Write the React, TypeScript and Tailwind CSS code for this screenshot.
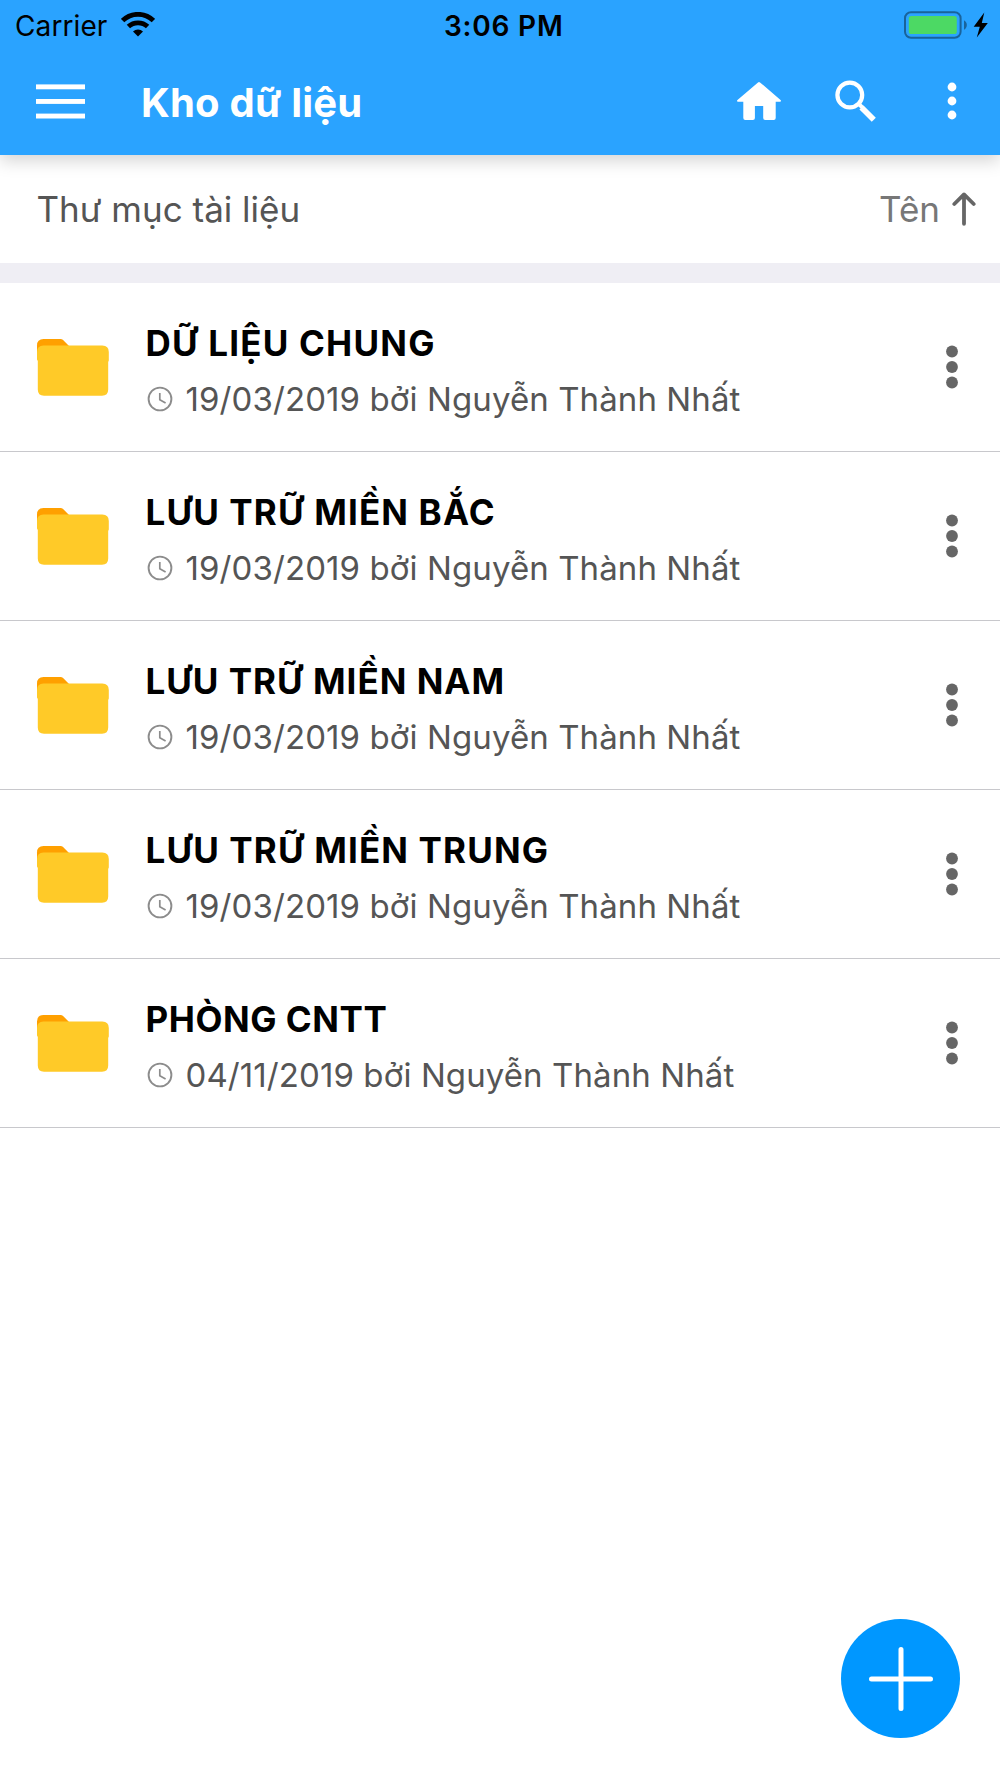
type Folder = {
  name: string;
  date: string;
  owner: string;
  tracking: string;
};

const folders: Folder[] = [
  { name: "DỮ LIỆU CHUNG", date: "19/03/2019", owner: "Nguyễn Thành Nhất", tracking: "tracking-[1.2px]" },
  { name: "LƯU TRỮ MIỀN BẮC", date: "19/03/2019", owner: "Nguyễn Thành Nhất", tracking: "tracking-[1.15px]" },
  { name: "LƯU TRỮ MIỀN NAM", date: "19/03/2019", owner: "Nguyễn Thành Nhất", tracking: "tracking-[1px]" },
  { name: "LƯU TRỮ MIỀN TRUNG", date: "19/03/2019", owner: "Nguyễn Thành Nhất", tracking: "tracking-[1.15px]" },
  { name: "PHÒNG CNTT", date: "04/11/2019", owner: "Nguyễn Thành Nhất", tracking: "tracking-[0.55px]" },
];

function WifiIcon() {
  return (
    <svg className="h-[25px] w-[34px]" viewBox="0 0 34 25" fill="none">
      <path d="M1.6 8.6a22 22 0 0 1 30.8 0" stroke="#000" strokeWidth="4.8" />
      <path d="M7.4 14.6a14 14 0 0 1 19.2 0" stroke="#000" strokeWidth="4.8" />
      <path d="M17 24.6l-5-5.1a7.6 7.6 0 0 1 10 0z" fill="#000" />
    </svg>
  );
}

function BatteryIcon() {
  return (
    <svg className="h-[28px] w-[64px]" viewBox="0 0 64 28" fill="none">
      <rect x="1" y="1.2" width="55.6" height="25.6" rx="6" stroke="#19639b" strokeWidth="2" />
      <rect x="4.8" y="5" width="48" height="18" rx="2.6" fill="#4cd964" />
      <path d="M60 9.2c1.8 1 2.8 2.8 2.8 4.8s-1 3.8-2.8 4.8z" fill="#19639b" />
    </svg>
  );
}

function BoltIcon() {
  return (
    <svg className="h-[26px] w-[16px]" viewBox="0 0 16 26">
      <path d="M11.3 0.5L0.7 14.8h6.1L3.8 25.5 14.8 11H8.8z" fill="#000" />
    </svg>
  );
}

function MenuIcon() {
  return (
    <svg className="h-[35px] w-[49px]" viewBox="0 0 49 35" fill="#fff">
      <rect y="0.4" width="49" height="4.9" />
      <rect y="15" width="49" height="4.9" />
      <rect y="29.6" width="49" height="4.9" />
    </svg>
  );
}

function HomeIcon() {
  return (
    <svg className="h-[40px] w-[46px]" viewBox="0 0 46 40" fill="#fff">
      <path d="M22 1.4q1-.8 2 0L44.8 19.2q.6 1.4-.8 1.5h-4.3v16.4q0 2-2 2H29.2q-2 0-2-2V25.100h-8.300v12q0 2-2 2H9.300q-2 0-2-2V20.700H2q-1.400-.1-.8-1.500z" />
    </svg>
  );
}

function SearchIcon() {
  return (
    <svg className="h-[42px] w-[42px]" viewBox="0 0 42 42" fill="none" stroke="#fff">
      <circle cx="14.8" cy="15" r="12.4" strokeWidth="4.2" />
      <path d="M23.5 23.7l4 4" strokeWidth="4" />
      <path d="M26.5 27.5L38.8 39.7" strokeWidth="5.8" />
    </svg>
  );
}

function HeaderDots() {
  return (
    <svg className="h-[38px] w-[10px]" viewBox="0 0 10 38" fill="#fff">
      <circle cx="5" cy="5" r="4.4" />
      <circle cx="5" cy="19" r="4.4" />
      <circle cx="5" cy="33" r="4.4" />
    </svg>
  );
}

function RowDots() {
  return (
    <svg className="h-[44px] w-[12px]" viewBox="0 0 12 44" fill="#666">
      <circle cx="6" cy="6.5" r="5.9" />
      <circle cx="6" cy="22" r="5.9" />
      <circle cx="6" cy="37.5" r="5.9" />
    </svg>
  );
}

function SortArrow() {
  return (
    <svg
      className="h-[34px] w-[24px]"
      viewBox="0 0 24 34"
      fill="none"
      stroke="#666"
      strokeWidth="3.8"
      strokeLinecap="round"
      strokeLinejoin="round"
    >
      <path d="M12 31.8V2.5M2.3 12L12 2.4 21.7 12" />
    </svg>
  );
}

function FolderIcon() {
  return (
    <svg className="h-[58px] w-[74px]" viewBox="0 0 74 58">
      <path d="M1 20V7.5Q1 1 7.5 1h17q1.5 0 2.6 1.1L35 10v10z" fill="#ffa000" />
      <path
        d="M1 14q0-6.5 6.500-6.500h58.800q6.500 0 6.500 6.500v8.500l-.6 1.500v27.500q0 6.200-6.200 6.200H8q-6.200 0-6.200-6.200V23L1 21.500z"
        fill="#ffca28"
      />
    </svg>
  );
}

function ClockIcon() {
  return (
    <svg className="h-[26px] w-[26px]" viewBox="0 0 26 26" fill="none" stroke="#8c8c8c">
      <circle cx="13" cy="13" r="11.4" strokeWidth="1.9" />
      <path d="M12.8 7v6.8l5.8 3.2" strokeWidth="1.7" />
    </svg>
  );
}

function StatusBar() {
  return (
    <div className="grid h-[49px] grid-cols-[1fr_auto_1fr] items-center pr-[11.5px] pl-[15px] text-[28px] leading-none text-black">
      <div className="flex items-center gap-[14px]">
        <span className="pt-[2px] tracking-[0.1px]">Carrier</span>
        <WifiIcon />
      </div>
      <span className="pt-[2px] pl-[4px] font-semibold tracking-[0.8px]">3:06 PM</span>
      <div className="flex items-center justify-end gap-[5px]">
        <BatteryIcon />
        <BoltIcon />
      </div>
    </div>
  );
}

function Toolbar() {
  return (
    <div className="flex h-[104px] items-center pr-[43.5px] pl-[36px] text-white">
      <MenuIcon />
      <h1 className="ml-[56px] flex-1 pt-[4px] text-[40px] leading-none font-bold tracking-[0.2px]">Kho dữ liệu</h1>
      <HomeIcon />
      <div className="ml-[53px]">
        <SearchIcon />
      </div>
      <div className="ml-[70px] flex">
        <HeaderDots />
      </div>
    </div>
  );
}

function FolderRow({ folder }: { folder: Folder }) {
  return (
    <li className="flex h-[169px] items-center border-b border-[#c8c8cc] pr-[42.5px] pl-[35.5px]">
      <FolderIcon />
      <div className="ml-[36px] flex-1 pt-[8px]">
        <p className={`text-[35px] leading-[56px] font-bold text-black ${folder.tracking}`}>{folder.name}</p>
        <div className="flex items-center gap-[13px] pl-px">
          <ClockIcon />
          <p className="text-[33px] leading-[56px] tracking-[0.09px] whitespace-nowrap text-[#555]">
            {folder.date} bởi {folder.owner}
          </p>
        </div>
      </div>
      <RowDots />
    </li>
  );
}

export default function App() {
  return (
    <div className="relative h-[1778px] w-[1000px] overflow-hidden bg-white font-['Inter','Liberation_Sans',sans-serif]">
      <header className="relative z-10 h-[154.5px] bg-[#2aa3ff] shadow-[0_6px_16px_rgba(0,0,0,0.17)]">
        <StatusBar />
        <Toolbar />
      </header>

      <div className="flex h-[108.5px] items-center justify-between pr-[24px] pl-[36.5px] text-[35px] leading-none">
        <h2 className="pt-[1.5px] text-[#555]">Thư mục tài liệu</h2>
        <div className="flex items-center gap-[12px] text-[#777]">
          <span className="pt-[1.5px]">Tên</span>
          <SortArrow />
        </div>
      </div>
      <div className="h-[20px] bg-[#efeef4]" />

      <ul>
        {folders.map((folder) => (
          <FolderRow key={folder.name} folder={folder} />
        ))}
      </ul>

      <button
        className="absolute top-[1619px] left-[841px] flex size-[119px] items-center justify-center rounded-full bg-[#0097ff]"
        aria-label="Thêm"
      >
        <svg className="size-[66px]" viewBox="0 0 66 66" stroke="#fff" strokeWidth="5" strokeLinecap="round">
          <path d="M33 3.5v59M3.5 33h59" />
        </svg>
      </button>
    </div>
  );
}
